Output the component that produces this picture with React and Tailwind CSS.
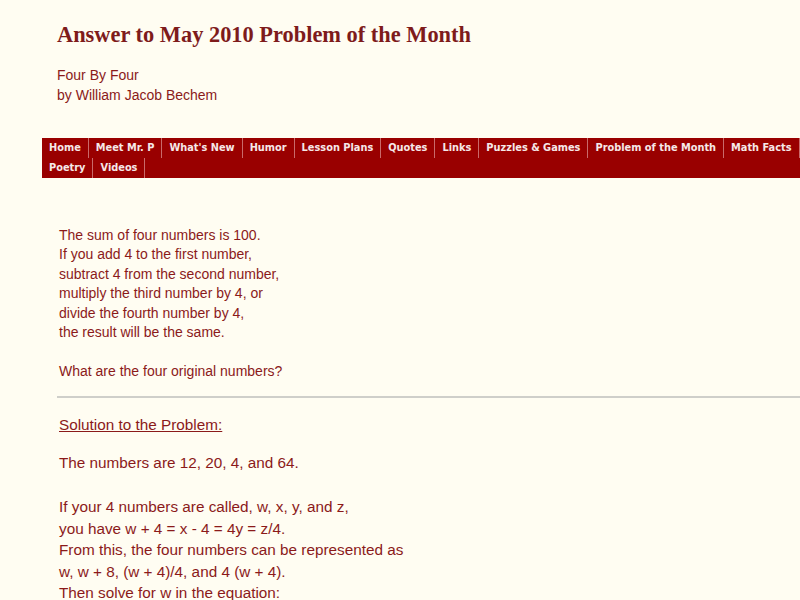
export default function App() {
  const row1 = ["Home", "Meet Mr. P", "What's New", "Humor", "Lesson Plans", "Quotes", "Links", "Puzzles & Games", "Problem of the Month", "Math Facts"];
  const row2 = ["Poetry", "Videos"];
  const navItem = (t) => (
    <div key={t} className="px-[7px] h-[20px] flex items-center whitespace-nowrap border-r border-[#c96a6a] text-[9.8px] font-bold text-[#f6e8e8]">
      {t}
    </div>
  );
  return (
    <div className="w-[800px] h-[600px] overflow-hidden bg-[#fffdf2] text-[#8b1a1a] font-['Liberation_Sans',Arial,sans-serif]">
      <div className="pt-[22px] pl-[57px]">
        <h1 className="font-['Liberation_Serif',serif] font-bold text-[22.4px] leading-[26px] text-[#7e1b1b]">
          Answer to May 2010 Problem of the Month
        </h1>
        <div className="mt-[17px] text-[14px] leading-[20px]">
          Four By Four
          <br />
          by William Jacob Bechem
        </div>
      </div>
      <div className="mt-[33px] ml-[42px] bg-[#990000] font-['DejaVu_Sans',sans-serif]">
        <div className="flex overflow-hidden">{row1.map(navItem)}</div>
        <div className="flex overflow-hidden">{row2.map(navItem)}</div>
      </div>
      <div className="mt-[48px] pl-[59px] text-[14px] leading-[19.4px]">
        The sum of four numbers is 100.
        <br />
        If you add 4 to the first number,
        <br />
        subtract 4 from the second number,
        <br />
        multiply the third number by 4, or
        <br />
        divide the fourth number by 4,
        <br />
        the result will be the same.
        <br />
        <br />
        What are the four original numbers?
      </div>
      <div className="mt-[15px] ml-[57px] h-[2px] bg-[#cfcfca]" />
      <div className="pl-[59px] text-[15.3px] leading-[21.5px]">
        <div className="mt-[16px] underline">Solution to the Problem:</div>
        <div className="mt-[16px]">The numbers are 12, 20, 4, and 64.</div>
        <div className="mt-[23px]">
          If your 4 numbers are called, w, x, y, and z,
          <br />
          you have w + 4 = x - 4 = 4y = z/4.
          <br />
          From this, the four numbers can be represented as
          <br />
          w, w + 8, (w + 4)/4, and 4 (w + 4).
          <br />
          Then solve for w in the equation:
        </div>
      </div>
    </div>
  );
}
